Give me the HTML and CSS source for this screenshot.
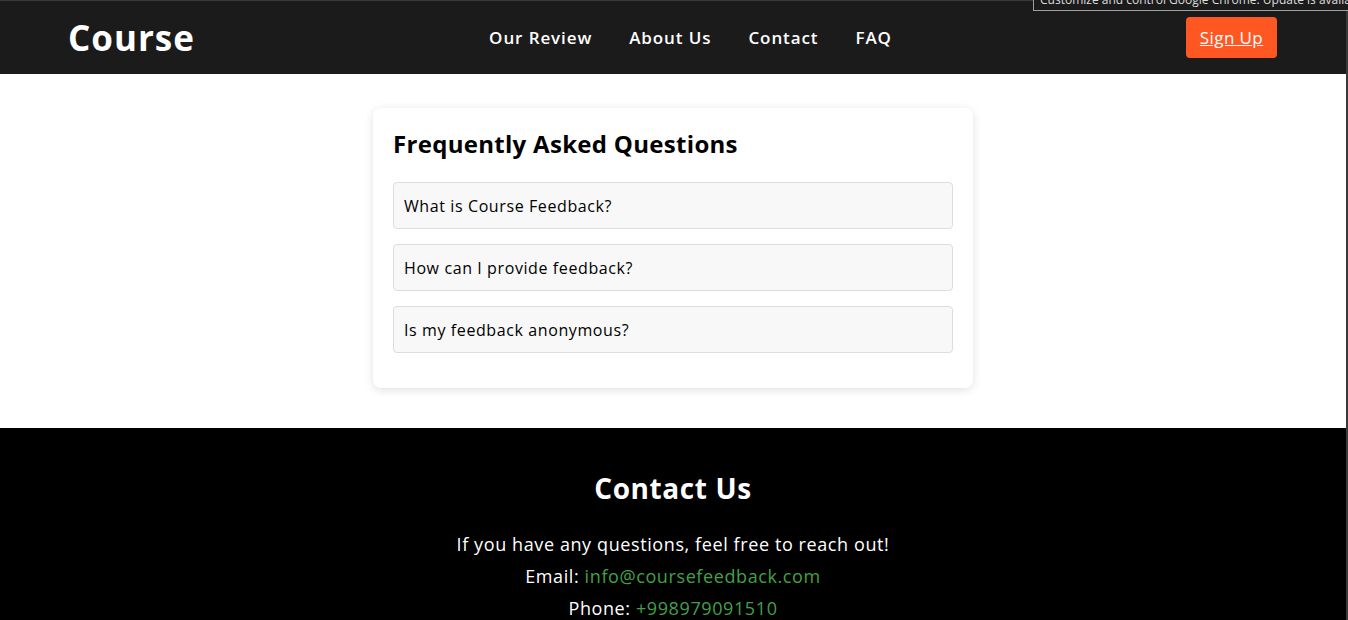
FILE: index.html
```html
<!DOCTYPE html>
<html lang="en">
<head>
<meta charset="utf-8">
<title>Course Feedback</title>
<link rel="stylesheet" href="styles.css">
</head>
<body>
<div class="frame">
  <header class="site-header">
    <div class="logo">Course</div>
    <nav class="nav">
      <a href="#">Our Review</a>
      <a href="#">About Us</a>
      <a href="#">Contact</a>
      <a href="#">FAQ</a>
    </nav>
    <a class="signup" href="#">Sign Up</a>
  </header>

  <main class="main">
    <section class="faq-card">
      <h2>Frequently Asked Questions</h2>
      <div class="faq-item">What is Course Feedback?</div>
      <div class="faq-item">How can I provide feedback?</div>
      <div class="faq-item">Is my feedback anonymous?</div>
    </section>
  </main>

  <footer class="contact">
    <h2>Contact Us</h2>
    <p>If you have any questions, feel free to reach out!</p>
    <p>Email: <a href="#">info@coursefeedback.com</a></p>
    <p>Phone: <a href="#">+998979091510</a></p>
  </footer>

  <div class="tooltip">Customize and control Google Chrome. Update is available</div>
</div>
</body>
</html>
```
FILE: styles.css
```css
* { box-sizing: border-box; }
html, body { margin: 0; padding: 0; }
body {
  font-family: "Open Sans", "Noto Sans", sans-serif;
  background: #fff;
  color: #000;
  overflow: hidden;
}
.frame {
  position: relative;
  border-top: 1px solid #3a3a3a;
  border-right: 2px solid #3a3a3a;
  min-height: 620px;
}
.site-header {
  height: 73px;
  background: #1b1b1b;
  display: flex;
  align-items: center;
  justify-content: space-between;
  padding: 0 69px 0 68px;
}
.logo {
  color: #fff;
  font-size: 35px;
  font-weight: 700;
  letter-spacing: 1px;
}
.nav {
  display: flex;
  gap: 37px;
}
.nav a {
  color: #fff;
  text-decoration: none;
  font-size: 17px;
  font-weight: 600;
  letter-spacing: 0.9px;
}
.signup {
  background: #ff5722;
  color: #fff;
  font-size: 17px;
  letter-spacing: 0.4px;
  height: 41px;
  width: 91px;
  display: flex;
  align-items: center;
  justify-content: center;
  border-radius: 4px;
  text-decoration: underline;
}
.main {
  padding: 34px 0 40px;
}
.faq-card {
  width: 600px;
  margin: 0 auto;
  background: #fff;
  border-radius: 8px;
  box-shadow: 0 2px 10px rgba(0,0,0,0.12);
  padding: 20px 20px 35px;
}
.faq-card h2 {
  margin: 0 0 22px;
  font-size: 24px;
  font-weight: 700;
  line-height: 32px;
  letter-spacing: 0.3px;
}
.faq-item {
  background: #f8f8f8;
  border: 1px solid #ddd;
  border-radius: 4px;
  padding: 0 10px;
  height: 47px;
  display: flex;
  align-items: center;
  font-size: 16px;
  letter-spacing: 0.6px;
  margin-bottom: 15px;
}
.faq-item:last-child { margin-bottom: 0; }
.contact {
  background: #000;
  color: #fff;
  text-align: center;
  padding: 40px 20px 20px;
}
.contact h2 {
  margin: 0 0 20px;
  font-size: 28px;
  font-weight: 700;
  line-height: 40px;
  letter-spacing: 0.6px;
}
.contact p {
  margin: 0;
  font-size: 18px;
  line-height: 32px;
  letter-spacing: 0.6px;
}
.contact a {
  color: #43a047;
  text-decoration: none;
}
.tooltip {
  position: absolute;
  top: -9px;
  left: 1033px;
  width: 340px;
  height: 19px;
  background: #1b1b1b;
  border: 1px solid #a0a0a0;
  color: #ddd;
  font-size: 12px;
  line-height: 14px;
  padding: 0 6px;
  white-space: nowrap;
  overflow: hidden;
}
```
